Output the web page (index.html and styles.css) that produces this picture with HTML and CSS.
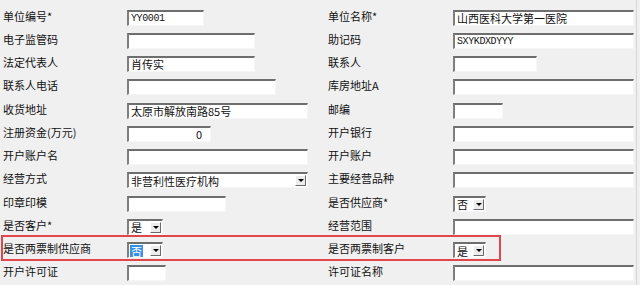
FILE: index.html
```html
<html>
   <head>
      <title>单位信息</title>
      <meta charset="utf-8">
      <link rel="stylesheet" href="styles.css">
   </head>

   <body>
      <div class="form">
         <div class="lbl">单位编号*</div>
         <div class="fld"><div class="box mono w77">YY0001</div></div>
         <div class="lbl">单位名称*</div>
         <div class="fld"><div class="box full">山西医科大学第一医院</div></div>

         <div class="lbl">电子监管码</div>
         <div class="fld"><div class="box w128"></div></div>
         <div class="lbl">助记码</div>
         <div class="fld"><div class="box mono full">SXYKDXDYYY</div></div>

         <div class="lbl">法定代表人</div>
         <div class="fld"><div class="box w128">肖传实</div></div>
         <div class="lbl">联系人</div>
         <div class="fld"><div class="box w84"></div></div>

         <div class="lbl">联系人电话</div>
         <div class="fld"><div class="box w149"></div></div>
         <div class="lbl">库房地址A</div>
         <div class="fld"><div class="box full"></div></div>

         <div class="lbl">收货地址</div>
         <div class="fld"><div class="box w181">太原市解放南路85号</div></div>
         <div class="lbl">邮编</div>
         <div class="fld"><div class="box w50"></div></div>

         <div class="lbl">注册资金(万元)</div>
         <div class="fld"><div class="box w84 num">0</div></div>
         <div class="lbl">开户银行</div>
         <div class="fld"><div class="box full"></div></div>

         <div class="lbl">开户账户名</div>
         <div class="fld"><div class="box w181"></div></div>
         <div class="lbl">开户账户</div>
         <div class="fld"><div class="box full"></div></div>

         <div class="lbl">经营方式</div>
         <div class="fld"><div class="box sel w181"><span class="val">非营利性医疗机构</span><span class="btn"></span></div></div>
         <div class="lbl">主要经营品种</div>
         <div class="fld"><div class="box full"></div></div>

         <div class="lbl">印章印模</div>
         <div class="fld"><div class="box w99"></div></div>
         <div class="lbl">是否供应商*</div>
         <div class="fld"><div class="box sel w33"><span class="val">否</span><span class="btn"></span></div></div>

         <div class="lbl">是否客户*</div>
         <div class="fld"><div class="box sel w36"><span class="val">是</span><span class="btn"></span></div></div>
         <div class="lbl">经营范围</div>
         <div class="fld"><div class="box full"></div></div>

         <div class="lbl">是否两票制供应商</div>
         <div class="fld"><div class="box sel w36"><span class="val picked">否</span><span class="btn"></span></div></div>
         <div class="lbl">是否两票制客户</div>
         <div class="fld"><div class="box sel w33"><span class="val">是</span><span class="btn"></span></div></div>

         <div class="lbl">开户许可证</div>
         <div class="fld"><div class="box w39"></div></div>
         <div class="lbl">许可证名称</div>
         <div class="fld"><div class="box full"></div></div>

         <div class="mark"></div>
      </div>
   </body>
</html>
```

FILE: styles.css
```css
body {margin: 0; background-color: #f0f0f0; font-family: "Noto Sans CJK SC", "Noto Sans", sans-serif; font-size: 11px; color: #111;}
.form {position: relative; display: grid; grid-template-columns: 124px 201px 125px 183px; grid-auto-rows: 23.25px; padding: 6px 0 0 3px; height: 279px; width: 633px; border-right: 1px solid #d6d6d6; overflow: hidden;}
.lbl {display: flex; align-items: center; padding-bottom: 4px; white-space: nowrap;}
.fld {display: flex; align-items: center;}
.box {box-sizing: border-box; height: 16px; background-color: #fff; border-style: solid; border-width: 2px 1px 1px 2px; border-color: #6e6e6e #f6f6f6 #f6f6f6 #7e7e7e; padding: 0 2px; line-height: 13px; white-space: nowrap; overflow: hidden; display: flex; align-items: center;}
.mono {font-family: "Liberation Mono", monospace; font-size: 10px; letter-spacing: -0.4px;}
.num {justify-content: flex-end; padding-right: 8px;}
.full {width: 181px;}
.w33 {width: 33px;} .w36 {width: 36px;} .w39 {width: 39px;} .w50 {width: 50px;}
.w77 {width: 77px;} .w84 {width: 84px;} .w99 {width: 99px;} .w128 {width: 128px;}
.w149 {width: 149px;} .w181 {width: 181px;}
.sel {padding: 0 1px 0 1px; justify-content: space-between;}
.sel .val {padding: 0 1px; line-height: 12px;}
.sel .picked {background-color: #3a8ee6; color: #fff;}
.btn {position: relative; width: 11px; height: 11px; background-color: #ececec; border: 1px solid; border-color: #fff #6a6a6a #6a6a6a #fff; box-sizing: border-box;}
.btn:after {content: ''; position: absolute; left: 2px; top: 3px; border-left: 3px solid transparent; border-right: 3px solid transparent; border-top: 3px solid #000;}
.mark {position: absolute; left: 1px; top: 235px; width: 500px; height: 26px; box-sizing: border-box; border: 2px solid #e0464c;}
```
